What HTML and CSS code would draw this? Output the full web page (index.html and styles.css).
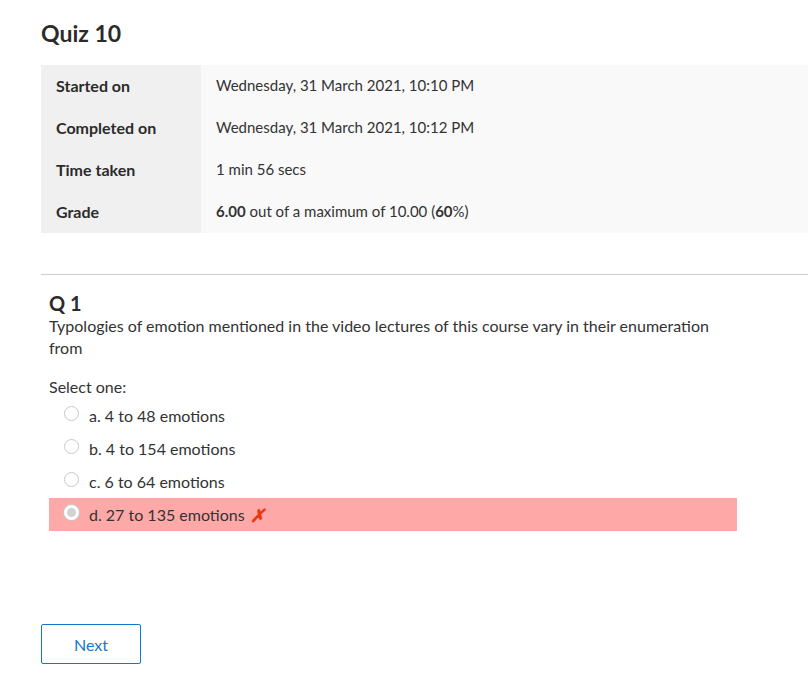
FILE: index.html
```html
<!DOCTYPE html>
<html>
<head>
<meta charset="utf-8">
<link rel="stylesheet" href="styles.css">
</head>
<body>
<div class="page">
  <h1 class="title">Quiz 10</h1>
  <table class="summary">
    <tr><th>Started on</th><td>Wednesday, 31 March 2021, 10:10 PM</td></tr>
    <tr><th>Completed on</th><td>Wednesday, 31 March 2021, 10:12 PM</td></tr>
    <tr><th>Time taken</th><td>1 min 56 secs</td></tr>
    <tr><th>Grade</th><td><b>6.00</b> out of a maximum of 10.00 (<b>60</b>%)</td></tr>
  </table>
  <hr class="rule">
  <div class="question">
    <h2 class="qno">Q 1</h2>
    <p class="qtext">Typologies of emotion mentioned in the video lectures of this course vary in their enumeration from</p>
    <p class="prompt">Select one:</p>
    <div class="answers">
      <div class="opt"><span class="radio"></span><span>a. 4 to 48 emotions</span></div>
      <div class="opt"><span class="radio"></span><span>b. 4 to 154 emotions</span></div>
      <div class="opt"><span class="radio"></span><span>c. 6 to 64 emotions</span></div>
      <div class="opt incorrect"><span class="radio checked"></span><span>d. 27 to 135 emotions</span><span class="cross">✗</span></div>
    </div>
  </div>
  <div class="nav"><button class="next">Next</button></div>
</div>
</body>
</html>
```
FILE: styles.css
```css
html, body { margin: 0; padding: 0; background: #fff; }
body {
  font-family: Lato, "Liberation Sans", sans-serif;
  font-size: 15px;
  color: #333;
  overflow: hidden;
}
.page { padding: 22px 0 0 41px; width: 767px; }
.title {
  margin: 0;
  font-size: 23px;
  font-weight: 700;
  line-height: 22px;
  color: #2b2b2b;
}
.summary {
  margin-top: 21px;
  border-collapse: collapse;
  width: 100%;
}
.summary th, .summary td {
  height: 40px;
  padding: 0 15px 2px 15px;
  text-align: left;
  vertical-align: middle;
}
.summary th {
  width: 130px;
  background: #f0f0f0;
  font-weight: 700;
  font-size: 16px;
  color: #2b2b2b;
}
.summary td { background: #f9f9f9; font-size: 15px; }
.summary b { font-weight: 700; }
.rule {
  margin: 41px 0 0 0;
  border: 0;
  border-top: 1px solid #cfcfcf;
  height: 0;
}
.question { padding: 17px 0 0 8px; width: 688px; font-size: 16px; }
.qno { margin: 0; font-size: 20px; line-height: 23px; font-weight: 700; color: #2b2b2b; }
.qtext { margin: 0; line-height: 22px; }
.prompt { margin: 17px 0 0 0; line-height: 22px; }
.answers { display: flex; flex-direction: column; margin-top: 1px; }
.opt {
  display: flex;
  align-items: center;
  height: 33px;
  padding-left: 15px;
}
.radio {
  width: 15px; height: 15px;
  border: 1px solid #c8c8c8;
  border-radius: 50%;
  background: #fff;
  margin-right: 10px;
  box-sizing: border-box;
  margin-top: -4px;
}
.radio.checked {
  border: 3px solid #fff;
  background: #d2d2d2;
  box-shadow: 0 0 0 1px #c8c8c8;
}
.incorrect { background: #ffa8a8; }
.cross { color: #f0360f; font-weight: 700; font-style: italic; margin-left: 5px; font-size: 18px; }
.nav { margin-top: 93px; }
.next {
  width: 100px; height: 40px;
  background: #fff;
  border: 1px solid #1177d1;
  border-radius: 2px;
  color: #1177d1;
  font-family: inherit;
  font-size: 16px;
}
```
